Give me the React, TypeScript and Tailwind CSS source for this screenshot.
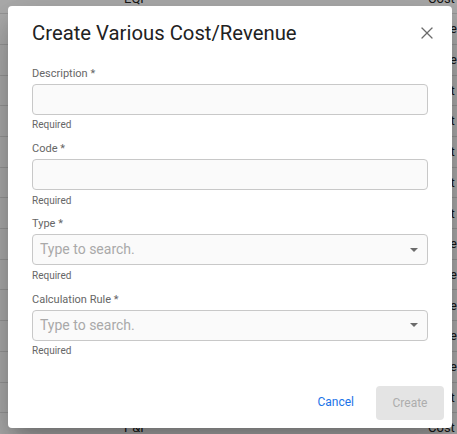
import { X } from "lucide-react"

const rows = [
  { a: "EQP", b: "Cost" },
  { a: "EQP", b: "Revenue" },
  { a: "EQP", b: "Revenue" },
  { a: "EQP", b: "Cost" },
  { a: "EQP", b: "Cost" },
  { a: "EQP", b: "Cost" },
  { a: "EQP", b: "Cost" },
  { a: "EQP", b: "Cost" },
  { a: "EQP", b: "Revenue" },
  { a: "EQP", b: "Revenue" },
  { a: "EQP", b: "Revenue" },
  { a: "EQP", b: "Revenue" },
  { a: "EQP", b: "Revenue" },
  { a: "EQP", b: "Cost" },
  { a: "P&P", b: "Cost" },
]

function Field({ label, select }: { label: string; select?: boolean }) {
  return (
    <div className="flex flex-col">
      <label className="mb-[2px] h-[16px] text-[11px] leading-[16px] text-[#666]">{label} *</label>
      <div className="flex h-[31px] items-center rounded-[4px] border border-[#c8c8c8] bg-[#fafafa] pl-[7px] pr-[9px]">
        {select && (
          <>
            <span className="flex-1 text-[14px] text-[#a9a9a9]">Type to search.</span>
            <span className="h-0 w-0 border-l-[4px] border-r-[4px] border-t-[4.5px] border-l-transparent border-r-transparent border-t-[#6b6b6b]" />
          </>
        )}
      </div>
      <p className="mt-[3.5px] h-[14px] text-[10px] leading-[14px] text-[#666]">Required</p>
    </div>
  )
}

export default function App() {
  return (
    <div className="relative h-[434px] w-[457px] overflow-hidden bg-white font-['Roboto',sans-serif]">
      {/* table behind the modal */}
      <div className="mt-[-16.4px] flex flex-col">
        {rows.map((r, i) => (
          <div key={i} className="flex h-[30.7px] shrink-0 items-center border-b border-[#e0e0e0] text-[13px] text-[#222]">
            <span className="ml-[124px] w-[304px]">{r.a}</span>
            <span className="whitespace-nowrap">{r.b}</span>
          </div>
        ))}
      </div>
      <div className="absolute inset-0 bg-black/[0.32]" />

      {/* modal */}
      <div className="absolute left-[8px] top-[6px] flex h-[421.5px] w-[444px] flex-col rounded-[4px] bg-white shadow-[0_11px_15px_-7px_rgba(0,0,0,0.2),0_24px_38px_3px_rgba(0,0,0,0.14),0_9px_46px_8px_rgba(0,0,0,0.12)]">
        <div className="flex items-center justify-between pl-6 pr-[15px] pt-[13.4px]">
          <h2 className="text-[20.3px] leading-[28px] text-[#222]">Create Various Cost/Revenue</h2>
          <button type="button" className="text-[#6b6b6b]">
            <X className="h-[20px] w-[20px]" strokeWidth={1.5} />
          </button>
        </div>

        <div className="mt-[18.5px] flex flex-col gap-[8.8px] px-6">
          <Field label="Description" />
          <Field label="Code" />
          <Field label="Type" select />
          <Field label="Calculation Rule" select />
        </div>

        <div className="mt-auto flex items-center justify-end gap-[14px] pb-[7.5px] pr-2">
          <button type="button" className="mt-[-2px] px-2 text-[12px] text-[#1a73e8]">Cancel</button>
          <button type="button" disabled className="h-[34px] w-[68px] rounded-[4px] bg-[#e4e4e4] text-[12px] text-[#adadad]">
            Create
          </button>
        </div>
      </div>
    </div>
  )
}
